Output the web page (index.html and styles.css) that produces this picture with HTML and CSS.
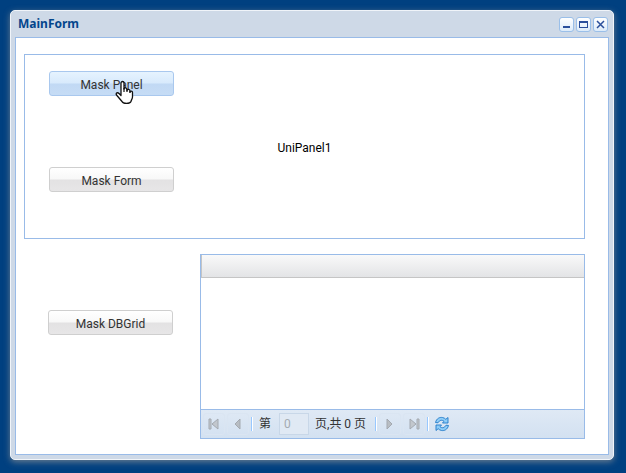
FILE: index.html
```html
<!DOCTYPE html>
<html lang="en">
<head>
  <meta charset="UTF-8" />
  <meta name="viewport" content="width=device-width, initial-scale=1.0" />
  <title>MainForm</title>
  <link rel="stylesheet" href="styles.css">
</head>
<body>
  <div class="window">
    <header class="window-header">
      <h1>MainForm</h1>
      <div class="tools">
        <button type="button" class="tool" aria-label="Minimize">
          <svg width="13" height="13" viewBox="0 0 13 13"><path d="M3 8h7v2H3z" fill="#2b4f9b"/></svg>
        </button>
        <button type="button" class="tool" aria-label="Maximize">
          <svg width="13" height="13" viewBox="0 0 13 13"><path d="M2 3h9v7H2zM3 5v4h7V5z" fill="#2b4f9b" fill-rule="evenodd"/></svg>
        </button>
        <button type="button" class="tool" aria-label="Close">
          <svg width="13" height="13" viewBox="0 0 13 13"><path d="M3 3l7 7M10 3l-7 7" stroke="#2b4f9b" stroke-width="1.5"/></svg>
        </button>
      </div>
    </header>

    <main class="window-body">
      <section class="panel">
        <div class="panel-buttons">
          <button type="button" class="btn btn-over">Mask Panel
            <svg class="cursor" width="19" height="25" viewBox="0 0 19 25"><path d="M6 14V3c0-2 3-2 3 0v6c0-1.500 3-1.500 3 .500v1c0-1.500 3-1.500 3 .500v1c0-1.200 2.500-1.200 2.500.500V17c0 2-1.500 3-1.500 4.500-1 2.500-8 2.500-9 0L1.500 15c-1-2 1-3 2.500-1.500l2 2z" fill="#fff" stroke="#111" stroke-width="1.300" stroke-linejoin="round"/><path d="M9 8v4M12 9v3M15 11v2" stroke="#111" stroke-width="1.200"/></svg>
          </button>
          <button type="button" class="btn">Mask Form</button>
        </div>
        <span class="panel-title">UniPanel1</span>
      </section>

      <section class="bottom-row">
        <button type="button" class="btn">Mask DBGrid</button>

        <div class="dbgrid">
          <div class="grid-header"></div>
          <div class="grid-view"></div>
          <div class="paging">
            <button type="button" class="page-btn" aria-label="First page" disabled>
              <svg width="12" height="12" viewBox="0 0 12 12"><path d="M1 1h2v10H1zM10 1v10L4 6z" fill="#c2c7cd" stroke="#a3a9b0"/></svg>
            </button>
            <button type="button" class="page-btn" aria-label="Previous page" disabled>
              <svg width="12" height="12" viewBox="0 0 12 12"><path d="M8 1v10L3 6z" fill="#b8bdc3" stroke="#a3a9b0"/></svg>
            </button>
            <span class="separator"></span>
            <label class="page-label" for="page">第</label>
            <input class="page-input" type="text" id="page" value="0" disabled />
            <span class="page-total">页,共 0 页</span>
            <span class="separator"></span>
            <button type="button" class="page-btn" aria-label="Next page" disabled>
              <svg width="12" height="12" viewBox="0 0 12 12"><path d="M3 1v10l5-5z" fill="#b8bdc3" stroke="#a3a9b0"/></svg>
            </button>
            <button type="button" class="page-btn" aria-label="Last page" disabled>
              <svg width="12" height="12" viewBox="0 0 12 12"><path d="M9 1h2v10H9zM2 1v10l6-5z" fill="#c2c7cd" stroke="#a3a9b0"/></svg>
            </button>
            <span class="separator"></span>
            <button type="button" class="page-btn" aria-label="Refresh">
              <svg width="16" height="16" viewBox="0 0 16 16"><g fill="#8fcdf7" stroke="#2079c8" stroke-width=".9" stroke-linejoin="round"><path d="M1.500 6.500C2.500 2.500 5.500 1 8.500 1.500c1.500.300 2.500 1 3.300 1.800L14 1.500V7H8.500L10 5.300C8 3.600 5.500 4 4 6.800z"/><path d="M14.500 9.500C13.500 13.500 10.500 15 7.500 14.500c-1.500-.300-2.500-1-3.300-1.800L2 14.500V9H7.500L6 10.700C8 12.400 10.500 12 12 9.200z"/></g></svg>
            </button>
          </div>
        </div>
      </section>
    </main>
  </div>
</body>
</html>
```

FILE: styles.css
```css
* {
  box-sizing: border-box;
}
body {
  margin: 0;
  min-height: 100vh;
  display: flex;
  padding: 10px 12px 13px 10px;
  background: #004080;
  font-family: Roboto, "Noto Sans CJK SC", sans-serif;
  font-size: 12px;
  line-height: 16px;
  color: #333;
}
button,
input {
  font: inherit;
  color: inherit;
}
.window {
  flex: 1;
  display: flex;
  flex-direction: column;
  padding: 0 4px 4px;
  background: #ced9e7;
  border: 1px solid #f0f4f9;
  border-radius: 5px;
  box-shadow: 0 2px 6px rgba(150, 150, 150, 0.7);
}
.window-header {
  display: flex;
  align-items: center;
  justify-content: space-between;
  height: 26px;
  padding: 0 1px 0 3px;
}
.window-header h1 {
  margin: 0;
  font-family: "Noto Sans", sans-serif;
  font-size: 12px;
  color: #04468c;
}
.tools {
  display: flex;
  gap: 2px;
}
.tool {
  display: flex;
  width: 15px;
  height: 15px;
  padding: 0;
  border: 1px solid #9abfe9;
  border-radius: 3px;
  background: linear-gradient(#fff, #dcebf9);
}
.window-body {
  flex: 1;
  display: grid;
  grid-template-rows: 1fr 1fr;
  gap: 15px;
  padding: 16px 23px 15px 8px;
  background: #fff;
  border: 1px solid #99bbe8;
}

/* Top panel */
.panel {
  display: grid;
  grid-template-columns: 1fr auto 1fr;
  align-items: center;
  border: 1px solid #99bbe8;
}
.panel-buttons {
  align-self: start;
  display: flex;
  flex-direction: column;
  gap: 71px;
  padding: 16px 24px;
}
.panel-title {
  padding-top: 2px;
  color: #000;
}

/* Buttons */
.btn {
  position: relative;
  width: 125px;
  height: 25px;
  padding: 2px 0 0;
  border: 1px solid #cfcfcf;
  border-radius: 3px;
  background: linear-gradient(#fff, #f8f8f8 48%, #e3e2e3 52%, #e7e6e7);
}
.btn-over {
  border-color: #a9c8ee;
  background: linear-gradient(#e6f3fe, #d8eafc 48%, #c1d9f4 52%, #c6dcf5);
}
.cursor {
  position: absolute;
  left: 65px;
  top: 8px;
}

/* Data grid */
.bottom-row {
  display: flex;
  align-items: flex-start;
  gap: 27px;
}
.bottom-row .btn {
  margin: 56px 0 0 24px;
}
.dbgrid {
  flex: 1;
  align-self: stretch;
  display: flex;
  flex-direction: column;
  border: 1px solid #99bbe8;
}
.grid-header {
  height: 23px;
  border: solid #c5c5c5;
  border-width: 0 0 1px 1px;
  background: linear-gradient(#f9f9f9, #e3e4e6);
}
.grid-view {
  flex: 1;
}
.paging {
  display: flex;
  align-items: center;
  gap: 2px;
  height: 30px;
  margin-bottom: -1px;
  padding: 0 2px;
  border-top: 1px solid #99bbe8;
  border-bottom: 1px solid #99bbe8;
  background: linear-gradient(#dfe9f5, #d3e1f1);
}
.page-btn {
  display: flex;
  align-items: center;
  justify-content: center;
  width: 22px;
  height: 22px;
  padding: 0;
  border: 1px solid transparent;
  border-radius: 3px;
  background: none;
}
.page-btn:disabled {
  border-color: #dae5f2;
}
.separator {
  width: 2px;
  height: 14px;
  background: linear-gradient(90deg, #98c8ff 50%, #fff 50%);
}
.page-label {
  margin: 0 6px 0 4px;
}
.page-input {
  width: 30px;
  height: 22px;
  padding: 0 4px;
  border: 1px solid #c8d7e8;
  background: #e0e9f4;
  color: #a5abb2;
}
.page-total {
  margin: 0 7px 0 4px;
}
```
